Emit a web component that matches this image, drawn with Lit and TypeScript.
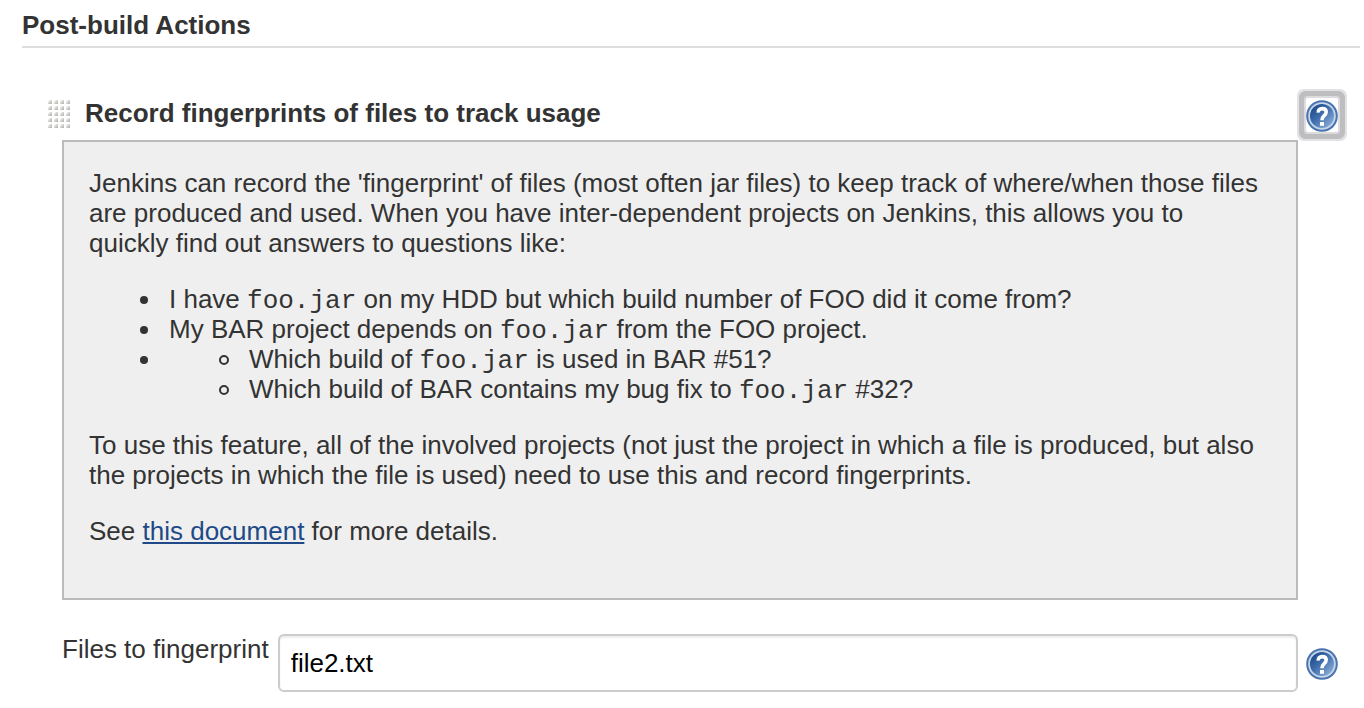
import { LitElement, html, css, svg } from "lit";
import { customElement, property } from "lit/decorators.js";

@customElement("help-button")
class HelpButton extends LitElement {
  @property() topic = "";
  @property({ type: Boolean }) active = false;

  static styles = css`
    :host {
      display: block;
    }
    .help {
      display: block;
      padding: 0;
      border: 0;
      background: #fff;
      cursor: pointer;
    }
    .help.active {
      padding: 2px 0 0;
      outline: none;
      box-shadow: 0 0 0 2px #dcdcde, 0 0 0 7px #bebec0, 0 0 0 9px #e2e2e4;
      border-radius: 2px;
    }
    .icon {
      display: block;
      width: 32px;
      height: 32px;
    }
  `;

  render() {
    return html`<button
      type="button"
      class="help ${this.active ? "active" : ""}"
      aria-label="Help for ${this.topic}"
    >
      <svg class="icon" viewBox="0 0 32 32" aria-hidden="true">
        <defs>
          <linearGradient id="disc" x1="0.1" y1="0.1" x2="0.85" y2="0.9">
            <stop offset="0" stop-color="#1f4a8a" />
            <stop offset="0.45" stop-color="#3f6cab" />
            <stop offset="1" stop-color="#86aad6" />
          </linearGradient>
        </defs>
        ${svg`
          <circle cx="16" cy="16" r="15.8" fill="#4a74ae" />
          <circle cx="16" cy="16" r="13.8" fill="#c6d6e9" />
          <circle cx="16" cy="16" r="12" fill="url(#disc)" />
          <path d="M12.3 12.6C12.1 10 13.6 8.6 16.2 8.6C18.8 8.6 20.2 10 20.2 12.1C20.2 14 19.1 14.9 18 15.8C16.6 17 16 17.8 16 20.2"
            fill="none" stroke="#fff" stroke-width="3.6" />
          <rect x="14" y="22" width="4" height="3.8" fill="#fff" />
        `}
      </svg>
    </button>`;
  }
}

@customElement("app-root")
class AppRoot extends LitElement {
  static styles = css`
    :host {
      display: block;
      font: 26px/30px "Liberation Sans", Arial, sans-serif;
      color: #333;
      background: #fff;
    }
    .page {
      padding: 10px 4px 16px 22px;
    }
    h2,
    h3 {
      margin: 0;
      font-size: 26px;
      line-height: 30px;
      font-weight: bold;
    }
    .section-title {
      padding-bottom: 6px;
      border-bottom: 2px solid #ddd;
    }
    .step {
      padding: 50px 22px 0 26px;
    }
    .head {
      display: flex;
      align-items: flex-start;
      height: 42px;
    }
    .grip {
      width: 22px;
      height: 30px;
      margin: 1px 15px 0 0;
    }
    .head h3 {
      flex: 1;
    }
    .body {
      padding-left: 14px;
    }
    .info {
      margin-right: 40px;
      padding: 0 32px 26px 25px;
      border: 2px solid #bbb;
      background: #efefef;
    }
    .info p {
      margin: 26px 0;
    }
    ul {
      margin: 26px 0;
      padding-left: 80px;
      list-style: none;
    }
    ul ul {
      margin: 0;
    }
    li::before {
      content: "";
      float: left;
      box-sizing: border-box;
      width: 8px;
      height: 8px;
      margin: 12px 21px 0 -29px;
      border-radius: 50%;
      background: #333;
    }
    li li::before {
      width: 10px;
      height: 10px;
      margin: 11px 20px 0 -30px;
      border: 2px solid #333;
      background: none;
    }
    code {
      font: 26px/26px "Liberation Mono", "Courier New", monospace;
    }
    a {
      color: #204a87;
    }
    .field {
      display: flex;
      align-items: flex-start;
      margin-top: 34px;
    }
    .field label {
      margin-right: 9px;
      white-space: nowrap;
    }
    .field input {
      flex: 1;
      min-width: 0;
      box-sizing: border-box;
      height: 58px;
      padding: 0 11px;
      border: 2px solid #ccc;
      border-radius: 6px;
      box-shadow: inset 0 2px 2px rgba(0, 0, 0, 0.07);
      background: #fff;
      color: #000;
      font: inherit;
      outline: none;
    }
    .field help-button {
      margin: 14px 0 0 8px;
    }
  `;

  private dots() {
    const cells = [];
    for (let r = 0; r < 5; r++) {
      for (let c = 0; c < 4; c++) {
        cells.push(
          svg`<path d="M${c * 6 + 4} ${r * 6 + 1}v4h-4v-1q0-3 3-3z" fill="url(#dot)" />`
        );
      }
    }
    return cells;
  }

  render() {
    return html`
      <main class="page">
        <h2 class="section-title">Post-build Actions</h2>
        <section class="step">
          <div class="head">
            <svg class="grip" viewBox="0 0 22 30" aria-hidden="true">
              <defs>
                <linearGradient id="dot" x1="0" y1="0" x2="1" y2="1">
                  <stop offset="0" stop-color="#f8f8f6" />
                  <stop offset="1" stop-color="#adada8" />
                </linearGradient>
              </defs>
              ${this.dots()}
            </svg>
            <h3>Record fingerprints of files to track usage</h3>
            <help-button active topic="Record fingerprints"></help-button>
          </div>
          <div class="body">
            <div class="info">
              <p>
                Jenkins can record the 'fingerprint' of files (most often jar
                files) to keep track of where/when those files are produced and
                used. When you have inter-dependent projects on Jenkins, this
                allows you to quickly find out answers to questions like:
              </p>
              <ul>
                <li>
                  I have <code>foo.jar</code> on my HDD but which build number
                  of FOO did it come from?
                </li>
                <li>
                  My BAR project depends on <code>foo.jar</code> from the FOO
                  project.
                </li>
                <li>
                  <ul>
                    <li>Which build of <code>foo.jar</code> is used in BAR #51?</li>
                    <li>
                      Which build of BAR contains my bug fix to
                      <code>foo.jar</code> #32?
                    </li>
                  </ul>
                </li>
              </ul>
              <p>
                To use this feature, all of the involved projects (not just the
                project in which a file is produced, but also the projects in
                which the file is used) need to use this and record
                fingerprints.
              </p>
              <p>See <a href="#">this document</a> for more details.</p>
            </div>
            <div class="field">
              <label for="files">Files to fingerprint</label>
              <input id="files" type="text" value="file2.txt" />
              <help-button topic="Files to fingerprint"></help-button>
            </div>
          </div>
        </section>
      </main>
    `;
  }
}
